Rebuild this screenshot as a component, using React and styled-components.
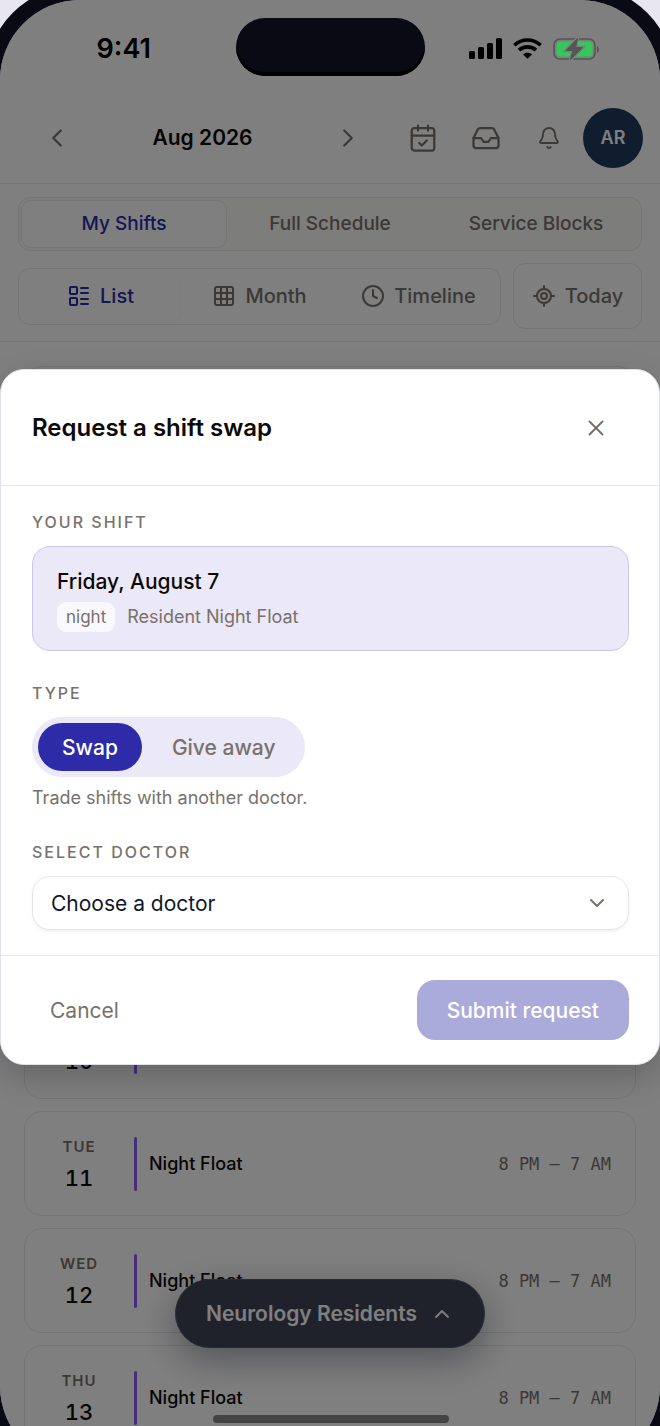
import styled, { createGlobalStyle, css } from "styled-components";
import { useState } from "react";
import {
  Bell,
  CalendarCheck,
  ChevronDown,
  ChevronLeft,
  ChevronRight,
  ChevronUp,
  Clock,
  Grid3x3,
  Inbox,
  LayoutList,
  LocateFixed,
  X,
} from "lucide-react";

const GlobalStyle = createGlobalStyle`
  * {
    box-sizing: border-box;
  }
  body {
    margin: 0;
    background: #e8e6f1;
    font-family: Inter, "Liberation Sans", sans-serif;
    color: #0c0a09;
  }
  button, select, input {
    font-family: inherit;
  }
`;

const Stage = styled.div`
  height: 100vh;
  overflow: hidden;
`;

const Device = styled.div`
  position: relative;
  height: calc(100vh + 40px);
  background: #fff;
  border-radius: 80px;
  box-shadow: 0 0 0 15px #0a0a14;
  overflow: hidden;
`;

const StatusBar = styled.div`
  position: absolute;
  inset: 0 0 auto 0;
  z-index: 3;
  display: grid;
  grid-template-columns: 1fr 189px 1fr;
  align-items: center;
  height: 94px;
  color: #000;
`;

const Time = styled.span`
  padding: 4px 0 0 12px;
  font-size: 27px;
  line-height: 32px;
  font-weight: 600;
  text-align: center;
`;

const Island = styled.div`
  height: 58px;
  border-radius: 29px;
  background: #0a0a14;
  box-shadow: inset 0 -4px 0 #000;
`;

const StatusIcons = styled.div`
  display: flex;
  align-items: center;
  gap: 11px;
  padding: 4px 0 0 44px;
`;

const HomeBar = styled.div`
  position: absolute;
  left: calc(50% - 117px);
  bottom: 43px;
  z-index: 3;
  width: 236px;
  height: 8px;
  border-radius: 4px;
  background: #444;
`;

const Header = styled.header`
  display: flex;
  align-items: center;
  margin-top: 92px;
  height: 92px;
  padding: 0 17px 0 33px;
  border-bottom: 1px solid #eae8e7;
`;

const MonthNav = styled.div`
  flex: 1;
  display: flex;
  align-items: center;
  justify-content: space-between;
  margin-right: 19px;
`;

const MonthTitle = styled.h1`
  margin: 0;
  font-size: 21px;
  line-height: 28px;
  font-weight: 600;
`;

const IconButton = styled.button`
  display: flex;
  align-items: center;
  justify-content: center;
  width: ${({ $width }) => $width || 48}px;
  height: 48px;
  padding: 0;
  border: 0;
  background: none;
  color: #78716c;
`;

const Avatar = styled.button`
  width: 60px;
  height: 60px;
  margin-left: 3px;
  padding: 0;
  border: 0;
  border-radius: 50%;
  background: #1e3a5f;
  color: #fff;
  font-size: 18px;
  font-weight: 600;
`;

const Toolbar = styled.div`
  display: flex;
  flex-direction: column;
  gap: 12px;
  padding: 13px 18px 12px;
  border-bottom: 1px solid #eae8e7;
`;

const ToolRow = styled.div`
  display: flex;
  align-items: center;
  gap: 12px;
`;

const Segments = styled.div`
  flex: 1;
  display: flex;
  height: ${({ $height }) => $height}px;
  padding: 2px;
  border: 1px solid #eae8e7;
  border-radius: 12px;
  background: ${({ $tinted }) => ($tinted ? "#fbfaf6" : "#fff")};
`;

const Segment = styled.button`
  flex: 1;
  display: flex;
  align-items: center;
  justify-content: center;
  gap: 9px;
  padding: 0;
  border: 1px solid transparent;
  border-radius: 10px;
  background: none;
  color: #78716c;
  font-size: ${({ $outlined }) => ($outlined ? 19 : 20)}px;
  line-height: 24px;
  font-weight: 500;

  ${({ $active }) =>
    $active &&
    css`
      background: #fff;
      color: #2d2ba8;
    `}
  ${({ $active, $outlined }) =>
    $active &&
    ($outlined
      ? css`
          border-color: #eae8e7;
        `
      : css`
          box-shadow: 1px 1px 1px #f8f8f8;
        `)}
`;

const TodayButton = styled(Segment)`
  flex: 0 0 129px;
  height: 66px;
  border-color: #eae8e7;
  border-radius: 12px;
`;

const ShiftList = styled.main`
  display: flex;
  flex-direction: column;
  gap: 12px;
  padding: 24px;
`;

const Card = styled.article`
  flex: none;
  display: flex;
  align-items: center;
  min-height: ${({ $tall }) => ($tall ? 616 : 105)}px;
  padding: 0 24px;
  border: 1px solid #eae8e7;
  border-radius: 18px;
  background: #fff;
`;

const DateBlock = styled.div`
  width: 60px;
  margin-right: 25px;
  padding-top: 5px;
  text-align: center;
`;

const Weekday = styled.div`
  font-size: 15px;
  line-height: 24px;
  font-weight: 600;
  letter-spacing: 1px;
  color: #78716c;
`;

const DayNumber = styled.div`
  font-size: 22px;
  line-height: 38px;
  font-weight: 500;
  font-variant-numeric: tabular-nums;
`;

const ShiftBar = styled.div`
  width: 3px;
  height: 54px;
  margin-right: 12px;
  border-radius: 2px;
  background: #8b5cf6;
`;

const ShiftName = styled.div`
  flex: 1;
  font-size: 18px;
  line-height: 24px;
  font-weight: 500;
`;

const Hours = styled.div`
  font-family: "DejaVu Sans Mono", monospace;
  font-size: 17px;
  line-height: 24px;
  color: #78716c;
`;

const GroupPicker = styled.button`
  position: absolute;
  left: 50%;
  bottom: 118px;
  transform: translateX(-50%);
  display: flex;
  align-items: center;
  gap: 13px;
  height: 69px;
  padding: 0 30px;
  border: 1px solid #565a6c;
  border-radius: 35px;
  background: #3f4357;
  box-shadow: 0 12px 36px rgba(30, 34, 60, 0.4);
  color: #fff;
  font-size: 21px;
  font-weight: 600;
  white-space: nowrap;
`;

const Overlay = styled.div`
  position: absolute;
  inset: 0;
  z-index: 2;
  display: flex;
  align-items: center;
  padding-bottom: 32px;
  background: rgba(0, 0, 0, 0.5);
`;

const Dialog = styled.section`
  flex: 1;
  border: 1px solid #e0e0f0;
  border-radius: 24px;
  background: #fff;
  box-shadow: 0 12px 32px rgba(0, 0, 0, 0.2);
`;

const DialogHeader = styled.div`
  display: flex;
  align-items: center;
  justify-content: space-between;
  height: 116px;
  padding: 0 39px 0 31px;
  border-bottom: 1px solid #e5e5ea;
`;

const DialogTitle = styled.h2`
  margin: 0;
  font-size: 24px;
  line-height: 32px;
  font-weight: 600;
`;

const DialogBody = styled.form`
  display: flex;
  flex-direction: column;
  gap: 30px;
  padding: 24px 30px 25px 31px;
`;

const Field = styled.div`
  display: flex;
  flex-direction: column;
`;

const FieldLabel = styled.label`
  margin-bottom: 12px;
  font-size: 16px;
  line-height: 24px;
  font-weight: 500;
  letter-spacing: 2px;
  color: #78716c;
`;

const ShiftCard = styled.div`
  padding: 20px 24px 18px;
  border: 1px solid #cdc6ec;
  border-radius: 18px;
  background: #ebe8f7;
`;

const ShiftDate = styled.div`
  font-size: 21px;
  line-height: 30px;
  font-weight: 500;
`;

const ShiftMeta = styled.div`
  display: flex;
  align-items: center;
  gap: 12px;
  margin-top: 5px;
  font-size: 18px;
  line-height: 30px;
  color: #78716c;
`;

const Badge = styled.span`
  padding: 0 9px;
  border-radius: 9px;
  background: #f9f8fd;
  font-size: 17px;
`;

const Toggle = styled.div`
  display: flex;
  align-self: flex-start;
  height: 60px;
  padding: 6px;
  border-radius: 30px;
  background: #ebe8f7;
`;

const ToggleOption = styled.label`
  position: relative;
  display: flex;
  align-items: center;
  padding: 0 24px;
  border-radius: 24px;
  color: #78716c;
  font-size: 21px;
  font-weight: 500;

  &:has(input:checked) {
    background: #2d2ba8;
    color: #fff;
  }
  & + & {
    margin-left: 6px;
  }
  input {
    position: absolute;
    inset: 0;
    margin: 0;
    opacity: 0;
  }
`;

const Hint = styled.p`
  margin: 9px 0 0;
  font-size: 18px;
  line-height: 24px;
  color: #78716c;
`;

const SelectBox = styled.div`
  position: relative;
  color: #78716c;

  select {
    display: block;
    width: 100%;
    height: 54px;
    padding: 0 54px 0 18px;
    border: 1px solid #e5e5e8;
    border-radius: 18px;
    background: #fff;
    box-shadow: 0 2px 3px rgba(0, 0, 0, 0.05);
    color: #0f172a;
    font-size: 21px;
    appearance: none;
  }
  svg {
    position: absolute;
    right: 20px;
    top: 15px;
    pointer-events: none;
  }
`;

const DialogFooter = styled.div`
  display: flex;
  align-items: center;
  justify-content: space-between;
  padding: 24px 30px 24px 31px;
  border-top: 1px solid #e5e5ea;
`;

const Button = styled.button`
  height: 60px;
  padding: 0 ${({ $primary }) => ($primary ? 30 : 18)}px;
  border: 0;
  border-radius: 18px;
  background: ${({ $primary }) => ($primary ? "#ababdb" : "none")};
  color: ${({ $primary }) => ($primary ? "#fff" : "#78716c")};
  font-size: 21px;
  font-weight: ${({ $primary }) => ($primary ? 500 : 400)};
`;

const shifts = [
  { weekday: "MON", day: 10 },
  { weekday: "TUE", day: 11 },
  { weekday: "WED", day: 12 },
  { weekday: "THU", day: 13 },
];

const tabs = ["My Shifts", "Full Schedule", "Service Blocks"];

const views = [
  { name: "List", Icon: LayoutList },
  { name: "Month", Icon: Grid3x3 },
  { name: "Timeline", Icon: Clock },
];

function Signal() {
  return (
    <svg width="33" height="22" viewBox="0 0 33 22">
      <rect x="0" y="13" width="6" height="8" rx="1.6" />
      <rect x="9" y="9" width="6" height="12" rx="1.6" />
      <rect x="18" y="5" width="6" height="16" rx="1.6" />
      <rect x="27" y="0" width="6" height="21" rx="1.6" />
    </svg>
  );
}

function Wifi() {
  return (
    <svg width="29" height="22" viewBox="0 0 29 22">
      <g fill="none" stroke="#000" strokeWidth="3.6">
        <path d="M1.3 7.3C8.7 .2 20.3 .2 27.7 7.3" />
        <path d="M6 12.2C10.8 7.8 18.2 7.8 23 12.2" />
      </g>
      <path d="M14.5 20.8L10 16.4C12.5 14.1 16.5 14.1 19 16.4Z" />
    </svg>
  );
}

function Battery() {
  const bolt = "M24.5 .5L13 12.5H20L17.5 21.5L29.5 9.5H22.5Z";
  return (
    <svg width="47" height="22" viewBox="0 0 47 22">
      <rect x="1" y="1" width="41" height="20" rx="6" fill="none" stroke="#555" strokeWidth="1.6" />
      <path d="M44 8V15C46.4 14 46.4 9 44 8Z" fill="#555" />
      <rect x="3.5" y="3.5" width="36" height="15" rx="4" fill="#34c759" />
      <path d={bolt} fill="#555" stroke="#7f7f7f" strokeWidth="3.4" />
      <path d={bolt} fill="#555" stroke="#555" strokeWidth="1" strokeLinejoin="round" />
    </svg>
  );
}

function ShiftRow({ weekday, day }) {
  return (
    <Card>
      <DateBlock>
        <Weekday>{weekday}</Weekday>
        <DayNumber>{day}</DayNumber>
      </DateBlock>
      <ShiftBar />
      <ShiftName>Night Float</ShiftName>
      <Hours>8 PM — 7 AM</Hours>
    </Card>
  );
}

function SwapDialog() {
  const [type, setType] = useState("Swap");

  return (
    <Overlay>
      <Dialog role="dialog" aria-labelledby="swap-title">
        <DialogHeader>
          <DialogTitle id="swap-title">Request a shift swap</DialogTitle>
          <IconButton aria-label="Close">
            <X size={26} strokeWidth={1.8} />
          </IconButton>
        </DialogHeader>
        <DialogBody>
          <Field>
            <FieldLabel as="div">YOUR SHIFT</FieldLabel>
            <ShiftCard>
              <ShiftDate>Friday, August 7</ShiftDate>
              <ShiftMeta>
                <Badge>night</Badge>
                <span>Resident Night Float</span>
              </ShiftMeta>
            </ShiftCard>
          </Field>
          <Field role="radiogroup" aria-labelledby="type-label">
            <FieldLabel as="div" id="type-label">TYPE</FieldLabel>
            <Toggle>
              {["Swap", "Give away"].map((option) => (
                <ToggleOption key={option}>
                  <input
                    type="radio"
                    name="type"
                    checked={type === option}
                    onChange={() => setType(option)}
                  />
                  {option}
                </ToggleOption>
              ))}
            </Toggle>
            <Hint>Trade shifts with another doctor.</Hint>
          </Field>
          <Field>
            <FieldLabel htmlFor="doctor">SELECT DOCTOR</FieldLabel>
            <SelectBox>
              <select id="doctor">
                <option>Choose a doctor</option>
              </select>
              <ChevronDown size={24} strokeWidth={2} />
            </SelectBox>
          </Field>
        </DialogBody>
        <DialogFooter>
          <Button>Cancel</Button>
          <Button $primary disabled>Submit request</Button>
        </DialogFooter>
      </Dialog>
    </Overlay>
  );
}

function App() {
  const [tab, setTab] = useState("My Shifts");
  const [view, setView] = useState("List");

  return (
    <Stage>
      <GlobalStyle />
      <Device>
        <StatusBar>
          <Time>9:41</Time>
          <Island />
          <StatusIcons>
            <Signal />
            <Wifi />
            <Battery />
          </StatusIcons>
        </StatusBar>

        <Header>
          <MonthNav>
            <IconButton aria-label="Previous month">
              <ChevronLeft size={30} strokeWidth={1.8} />
            </IconButton>
            <MonthTitle>Aug 2026</MonthTitle>
            <IconButton aria-label="Next month">
              <ChevronRight size={30} strokeWidth={1.8} />
            </IconButton>
          </MonthNav>
          <IconButton $width={63} aria-label="Requests">
            <CalendarCheck size={30} strokeWidth={1.8} />
          </IconButton>
          <IconButton $width={63} aria-label="Inbox">
            <Inbox size={30} strokeWidth={1.8} />
          </IconButton>
          <IconButton $width={63} aria-label="Notifications">
            <Bell size={24} strokeWidth={1.8} />
          </IconButton>
          <Avatar>AR</Avatar>
        </Header>

        <Toolbar>
          <ToolRow>
            <Segments $height={54} $tinted>
              {tabs.map((name) => (
                <Segment key={name} $outlined $active={name === tab} onClick={() => setTab(name)}>
                  {name}
                </Segment>
              ))}
            </Segments>
          </ToolRow>
          <ToolRow>
            <Segments $height={57}>
              {views.map(({ name, Icon }) => (
                <Segment key={name} $active={name === view} onClick={() => setView(name)}>
                  <Icon size={24} strokeWidth={2} />
                  {name}
                </Segment>
              ))}
            </Segments>
            <TodayButton>
              <LocateFixed size={24} strokeWidth={2} />
              Today
            </TodayButton>
          </ToolRow>
        </Toolbar>

        <ShiftList>
          <Card $tall />
          {shifts.map((shift) => (
            <ShiftRow key={shift.day} {...shift} />
          ))}
        </ShiftList>

        <GroupPicker>
          Neurology Residents
          <ChevronUp size={24} strokeWidth={1.8} />
        </GroupPicker>

        <SwapDialog />
        <HomeBar />
      </Device>
    </Stage>
  );
}

export default App;
